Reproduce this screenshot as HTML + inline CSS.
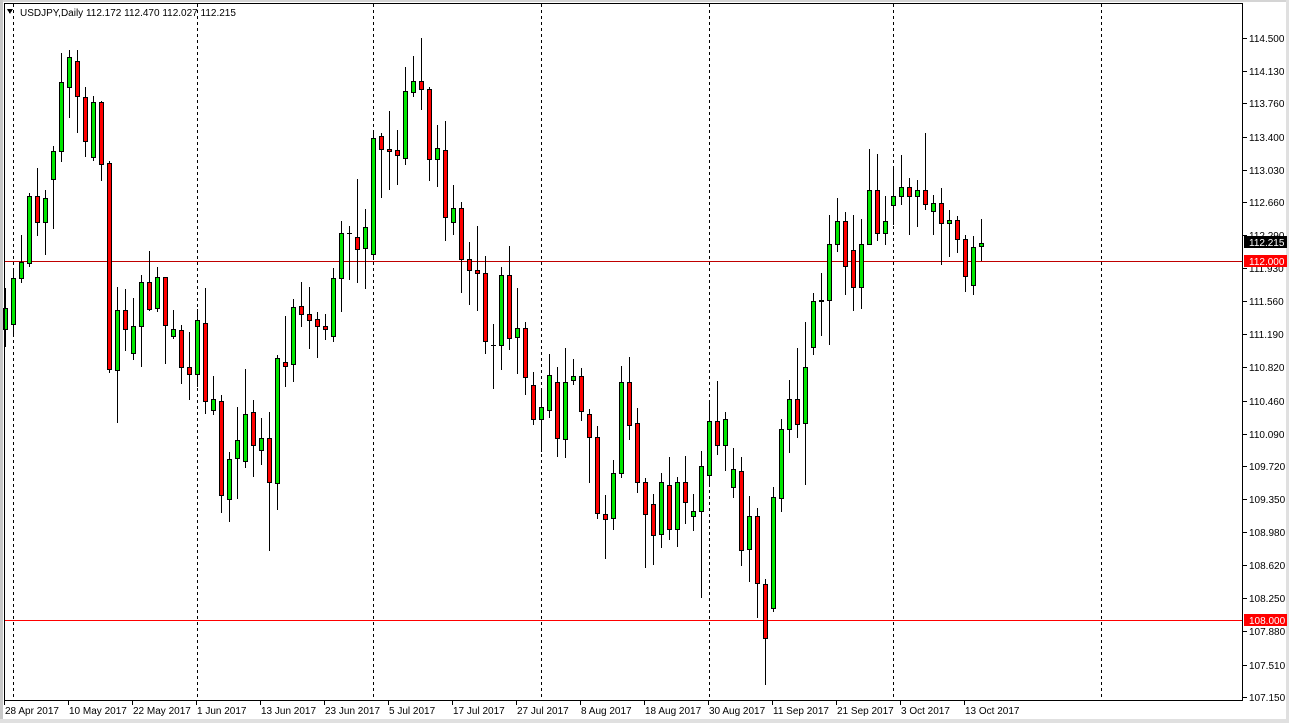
<!DOCTYPE html>
<html><head><meta charset="utf-8"><style>
html,body{margin:0;padding:0;width:1289px;height:723px;overflow:hidden;background:#fff;font-family:"Liberation Sans",sans-serif;}
svg text{font-family:"Liberation Sans",sans-serif;font-size:10px;}
</style></head><body>
<svg id="s" width="1289" height="723" xmlns="http://www.w3.org/2000/svg" shape-rendering="crispEdges">
<rect x="0" y="0" width="1289" height="723" fill="#fff"/>
<rect x="0" y="0" width="1289" height="2" fill="#d4d4d4"/>
<rect x="0" y="0" width="3" height="723" fill="#c8c8c8"/>
<rect x="0" y="719" width="1289" height="4" fill="#e0e0e0"/>
<rect x="1286" y="0" width="3" height="723" fill="#e0e0e0"/>
<g stroke="#000" stroke-width="1" stroke-dasharray="3,3">
<line x1="13.5" y1="4" x2="13.5" y2="700"/>
<line x1="197.5" y1="4" x2="197.5" y2="700"/>
<line x1="373.5" y1="4" x2="373.5" y2="700"/>
<line x1="541.5" y1="4" x2="541.5" y2="700"/>
<line x1="709.5" y1="4" x2="709.5" y2="700"/>
<line x1="893.5" y1="4" x2="893.5" y2="700"/>
<line x1="1101.5" y1="4" x2="1101.5" y2="700"/>
</g>
<line x1="4" y1="261.5" x2="1243" y2="261.5" stroke="#c00000" stroke-width="1"/>
<line x1="4" y1="620.5" x2="1243" y2="620.5" stroke="#ff0000" stroke-width="1"/>
<g id="c"></g>
<rect x="4.5" y="3.5" width="1238" height="697" fill="none" stroke="#000"/>
<polygon points="7,9 13,9 10,14" fill="#000"/>
<text x="20" y="16" fill="#000">USDJPY,Daily  112.172 112.470 112.027 112.215</text>
<g id="ax"></g>
</svg>
<script>
var s=document.getElementById('c'),ax=document.getElementById('ax'),NS='http://www.w3.org/2000/svg';
function el(p,t,a,txt){var e=document.createElementNS(NS,t);for(var k in a)e.setAttribute(k,a[k]);if(txt)e.textContent=txt;p.appendChild(e);return e;}
var A=[['g',835,897,775,948],['g',745,883,715,918],['g',697,745,615,757],['g',499,700,490,708],['r',499,575,414,614],['g',505,577,480,673],['g',364,448,348,593],['g',157,364,69,392],['g',82,172,60,260],['r',94,199,60,305],['r',202,334,172,377],['g',217,382,198,389],['r',217,403,213,449],['r',400,1018,393,1025],['g',841,1021,771,1175],['r',841,898,777,960],['g',889,970,803,987],['g',757,889,735,1007],['r',757,836,663,840],['g',742,835,711,842],['r',742,886,740,1000],['g',898,919,840,925],['r',901,1012,885,1058],['r',1012,1033,906,1106],['g',871,1033,838,1067],['r',880,1114,774,1148],['g',1108,1140,1038,1153],['r',1114,1396,1095,1445],['g',1288,1408,1265,1474],['g',1231,1285,1131,1403],['g',1153,1294,1018,1310],['r',1145,1245,1110,1337]];
var B=[['g',1205,1238,1145,1280],['r',1205,1332,1127,1533],['g',968,1335,960,1413],['r',980,992,843,1049],['g',818,986,793,1034],['r',815,838,743,872],['r',838,856,757,937],['r',853,874,833,966],['r',874,883,838,913],['g',732,903,701,916],['g',599,732,562,830],['d',600,600,577,736],['r',610,646,441,742],['g',581,643,527,762],['g',320,661,296,676],['r',312,350,305,493],['r',350,356,240,469],['r',353,368,296,455],['g',181,377,109,395],['g',149,184,77,194],['r',149,173,24,233],['r',173,380,167,443],['g',347,380,281,461],['r',353,551,269,620],['g',524,566,456,603],['r',524,676,506,772],['r',676,709,624,808],['r',707,717,577,827],['r',717,918,666,952],['d',928,928,867,1055],['g',723,928,698,1000],['r',723,910,636,940]];
var Z5=[['g',295,322,175,428],['r',295,442,277,491]];
var C=[['r',166,268,127,281],['g',232,268,175,362],['g',136,241,72,260],['r',157,325,111,377],['g',157,328,54,380],['g',139,151,87,163],['r',139,244,114,269],['r',253,322,238,455],['r',322,550,289,565],['r',553,568,494,683],['g',430,565,390,598],['g',157,430,108,442],['r',157,286,81,328],['r',280,457,235,487],['r',457,553,445,712],['r',523,616,493,703],['g',457,613,430,650],['r',466,598,381,626],['g',457,598,441,647],['r',457,517,378,578],['g',544,559,493,599],['g',409,544,363,802],['g',274,436,216,461],['r',274,346,153,371],['g',268,346,247,420],['g',418,472,354,502],['r',424,661,381,706],['g',559,658,497,754],['r',559,760,535,862]];
var D=[['r',1252,1398,1238,1523],['g',1018,1318,990,1325],['g',834,1020,808,1055],['g',752,834,703,897],['r',752,820,616,856],['g',668,818,546,983],['g',490,614,468,632],['g',485,490,414,580],['g',336,486,257,605],['g',274,334,211,353],['r',274,393,249,469],['r',350,452,257,513],['g',336,452,268,507],['g',190,334,78,334],['r',190,306,92,323],['g',274,306,205,334],['g',206,230,124,280],['g',180,204,95,226],['r',180,204,157,307],['g',190,204,162,286],['r',190,228,35,240],['g',223,247,203,307],['r',223,279,184,388],['g',271,279,243,367],['r',271,320,260,356],['r',320,422,311,461],['g',342,446,314,469],['g',331,341,268,377]];
var all=[];
function add(arr,off,sc){arr.forEach(function(d){all.push([d[0],off+d[1]/sc,off+d[2]/sc,off+d[3]/sc,off+d[4]/sc]);});}
add(A,30,3);add(B,30,2.95);add(Z5,230,3);add(C,330,3);add(D,120,2.7);
all.forEach(function(d,k){
 var c=5.5+8*k,bt=Math.round(d[1]),bb=Math.round(d[2]),wt=Math.round(d[3]),wb=Math.round(d[4]);
 el(s,'line',{x1:c,y1:wt,x2:c,y2:wb+1,stroke:'#000','stroke-width':1});
 if(d[0]=='d'||bb-bt<1){el(s,'line',{x1:c-2.5,y1:bt+0.5,x2:c+2.5,y2:bt+0.5,stroke:'#000','stroke-width':1});}
 else el(s,'rect',{x:c-2,y:bt+0.5,width:4,height:bb-bt,fill:d[0]=='g'?'#00e600':'#ff0000',stroke:'#000','stroke-width':1});
});
var L=[['114.500',38],['114.130',71],['113.760',103],['113.400',137],['113.030',170],['112.660',202],['112.290',235],['111.930',268],['111.560',301],['111.190',334],['110.820',367],['110.460',401],['110.090',434],['109.720',466],['109.350',499],['108.980',532],['108.620',565],['108.250',598],['107.880',631],['107.510',665],['107.150',697]];
L.forEach(function(l){el(ax,'line',{x1:1243,y1:l[1]+0.5,x2:1247,y2:l[1]+0.5,stroke:'#000'});el(ax,'text',{x:1249,y:l[1]+4,fill:'#000'},l[0]);});
el(ax,'rect',{x:1244,y:236,width:43,height:12,fill:'#000'});
el(ax,'text',{x:1249,y:246,fill:'#fff'},'112.215');
el(ax,'rect',{x:1244,y:255,width:43,height:12,fill:'#ff0000'});
el(ax,'text',{x:1249,y:265,fill:'#fff'},'112.000');
el(ax,'rect',{x:1244,y:614,width:43,height:12,fill:'#ff0000'});
el(ax,'text',{x:1249,y:624,fill:'#fff'},'108.000');
var D2=['28 Apr 2017','10 May 2017','22 May 2017','1 Jun 2017','13 Jun 2017','23 Jun 2017','5 Jul 2017','17 Jul 2017','27 Jul 2017','8 Aug 2017','18 Aug 2017','30 Aug 2017','11 Sep 2017','21 Sep 2017','3 Oct 2017','13 Oct 2017'];
D2.forEach(function(t,i){var x=4+64*i;el(ax,'line',{x1:x+0.5,y1:700,x2:x+0.5,y2:705,stroke:'#000'});el(ax,'text',{x:x+1,y:714,fill:'#000'},t);});
</script>
</body></html>
